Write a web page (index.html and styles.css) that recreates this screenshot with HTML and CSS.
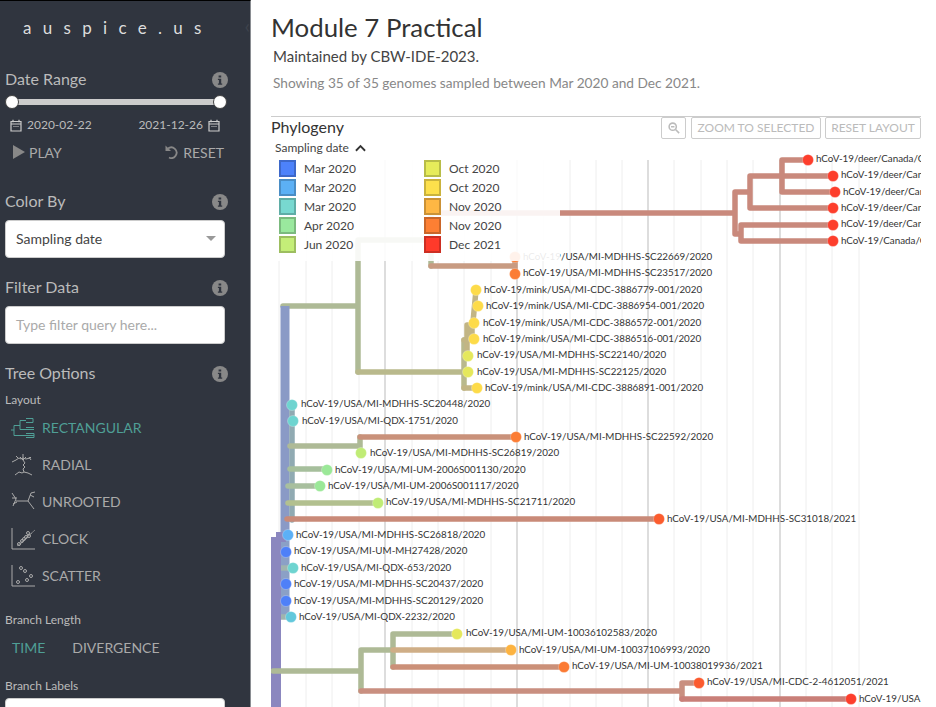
FILE: index.html
```html
<!DOCTYPE html>
<html lang="en">
<head>
    <meta charset="UTF-8">
    <title>auspice.us</title>
    <link rel="stylesheet" href="styles.css">
</head>
<body>
    <aside class="sidebar">
        <div class="brand">auspice.us</div>
        <span class="collapse">&#8249;</span>

        <div class="heading heading-date">Date Range <svg class="info" viewBox="0 0 16 16"><circle cx="8" cy="8" r="8"/><path d="M6.600 3.400h2.600v2.200H6.600zM5.900 6.800h3.300v4.600h1v1.300H5.900v-1.300h1v-3.300h-1z"/></svg></div>
        <div class="slider"><span class="knob"></span><span class="knob"></span></div>
        <div class="dates">
            <span class="date"><svg class="cal" viewBox="0 0 12 13"><path d="M1 2.500h10v9.500H1zM1 5h10M3 .800v2.400M9 .800v2.400M3.500 7.500h1M5.500 7.500h1M7.500 7.500h1"/></svg>2020-02-22</span>
            <span class="date">2021-12-26<svg class="cal" viewBox="0 0 12 13"><path d="M1 2.500h10v9.500H1zM1 5h10M3 .800v2.400M9 .800v2.400M3.500 7.500h1M5.500 7.500h1M7.500 7.500h1"/></svg></span>
        </div>
        <div class="transport">
            <span class="play"><svg class="play-icon" viewBox="0 0 12 14"><path d="M0 0l12 7-12 7z"/></svg>PLAY</span>
            <span class="reset"><svg class="reset-icon" viewBox="0 0 14 14"><path class="reset-head" d="M.500 .500v5.500h5.500z"/><path class="reset-arc" d="M3 3.500A5.300 5.300 0 1 1 4 12.500"/></svg>RESET</span>
        </div>

        <div class="heading heading-color">Color By <svg class="info" viewBox="0 0 16 16"><circle cx="8" cy="8" r="8"/><path d="M6.600 3.400h2.600v2.200H6.600zM5.900 6.800h3.300v4.600h1v1.300H5.900v-1.300h1v-3.300h-1z"/></svg></div>
        <div class="field select">Sampling date<span class="caret"></span></div>

        <div class="heading heading-filter">Filter Data <svg class="info" viewBox="0 0 16 16"><circle cx="8" cy="8" r="8"/><path d="M6.600 3.400h2.600v2.200H6.600zM5.900 6.800h3.300v4.600h1v1.300H5.900v-1.300h1v-3.300h-1z"/></svg></div>
        <div class="field placeholder">Type filter query here...</div>

        <div class="heading heading-tree">Tree Options <svg class="info" viewBox="0 0 16 16"><circle cx="8" cy="8" r="8"/><path d="M6.600 3.400h2.600v2.200H6.600zM5.900 6.800h3.300v4.600h1v1.300H5.900v-1.300h1v-3.300h-1z"/></svg></div>
        <div class="sublabel sublabel-layout">Layout</div>
        <ul class="layouts">
            <li class="layout active">
                <svg class="layout-icon" viewBox="0 0 24 22"><path d="M0 13h3M3 8.500v10M3 8.500h6M9 3.500v9M9 3.500h6M15 1.500h7v4h-7M9 12.500h14M3 18.500h20M15 10.500h8M15 16.500h8v4h-8"/></svg>
                RECTANGULAR
            </li>
            <li class="layout">
                <svg class="layout-icon" viewBox="0 0 24 24"><path d="M1 9l4-2 3-2 2 1 2-1 3 1 4-1 1-1M12 1v6M9 4l3 3 3-3M12 7l2 3-2 2 2 2-2 2 1 3M4 22l4-3 3 1 2-1 4 1 4 2M7 5l-2-2M18 4l2 3"/></svg>
                RADIAL
            </li>
            <li class="layout">
                <svg class="layout-icon" viewBox="0 0 24 24"><path d="M1 3l4 6-3 7M1 8h5M5 11l12 0M17 11l3-8 4-1M19 5l4 2M17 11l6 8M2 14l4-2"/></svg>
                UNROOTED
            </li>
            <li class="layout">
                <svg class="layout-icon" viewBox="0 0 24 24"><path d="M1 1v21h23"/><path class="thin" d="M6 19L24 3M8 19l4-5 5-5 4-3"/><circle cx="8" cy="17" r="1.500"/><circle cx="11" cy="14" r="1.500"/><circle cx="13" cy="12" r="1.500"/><circle cx="15" cy="10" r="1.500"/><circle cx="18" cy="9" r="1.500"/><circle cx="17" cy="6" r="1.500"/></svg>
                CLOCK
            </li>
            <li class="layout">
                <svg class="layout-icon" viewBox="0 0 24 24"><path d="M1 1v21h23"/><circle cx="10" cy="4" r="1.500"/><circle cx="14" cy="7" r="1.500"/><circle cx="20" cy="12" r="1.500"/><circle cx="16" cy="16" r="1.500"/><circle cx="7" cy="18" r="1.500"/></svg>
                SCATTER
            </li>
        </ul>
        <div class="sublabel sublabel-length">Branch Length</div>
        <div class="toggle"><span class="toggle-on">TIME</span><span>DIVERGENCE</span></div>
        <div class="sublabel sublabel-labels">Branch Labels</div>
        <div class="field select select-last"></div>
    </aside>

    <main class="main">
        <h1 class="title">Module 7 Practical</h1>
        <p class="byline">Maintained by CBW-IDE-2023.</p>
        <p class="summary">Showing 35 of 35 genomes sampled between Mar 2020 and Dec 2021.</p>

        <section class="panel">
            <svg class="tree" width="650" height="591" viewBox="271 116 650 591">
                <g class="grid">
                    <path d="M279 160V707M306 160V707M332 160V707M359 160V707M412 160V707M438 160V707M464 160V707M491 160V707M543 160V707M570 160V707M596 160V707M622 160V707M674 160V707M701 160V707M727 160V707M753 160V707M806 160V707M832 160V707M859 160V707"/>
                    <path class="major" d="M385 160V707M517 160V707M648 160V707M780 160V707"/>
                </g>

                <g class="branches">
                    <!-- deer clade -->
                    <path stroke="#c9897c" d="M431 213H735M735 192V234M735 192H750M750 176V208M750 176H782M782 160V192M782 160H808M782 192H835M750 176H833M750 208H833M735 234H741M741 225V241M741 225H833M741 241H833"/>
                    <path stroke="#aeba96" d="M358 240H431M431 213V266M358 240V372M283 306H358"/>
                    <path stroke="#c89b82" d="M431 266H515M515 257V274"/>
                    <!-- mink clade -->
                    <path stroke="#b9b98c" d="M358 372H464M464 340V388"/>
                    <path stroke="#c2b584" d="M464 388H477M464 340H474M467 325V355M467 355H468M467 325H474M472 339V322M473 322L476 290M475 306H478"/>
                    <!-- middle -->
                    <path class="thick" stroke="#8a9ac6" d="M285 306V532"/>
                    <path stroke="#90aab2" d="M292 405V520M292 421H293"/>
                    <path stroke="#aeba96" d="M290 446H360M360 437V452"/>
                    <path stroke="#c9917a" d="M360 437H516"/>
                    <path stroke="#a6bf9c" d="M290 469H327"/>
                    <path stroke="#a8bf9e" d="M288 486H320"/>
                    <path stroke="#b2c08f" d="M288 503H377"/>
                    <path stroke="#c98a78" d="M287 519H659"/>
                    <!-- lower -->
                    <path class="thick" stroke="#8ba0c6" d="M285 535V617"/>
                    <path stroke="#a0b4ae" d="M281 568H293M281 617H291"/>
                    <path class="root" stroke="#8b87bf" d="M276 537V707M276 537H286"/>
                    <path stroke="#aeba96" d="M273 671H361M361 650V691M361 650H393M393 634V667M393 634H457"/>
                    <path stroke="#cfae87" d="M393 650H511"/>
                    <path stroke="#cb9078" d="M393 667H564"/>
                    <path stroke="#c98f80" d="M361 691H682M682 683V699M682 683H699"/>
                    <path stroke="#c97f78" d="M682 699H851"/>
                </g>

                <g class="tips">
                    <circle cx="808" cy="160" r="5.500" fill="#fd3e2c"/>
                    <circle cx="833" cy="176" r="5.500" fill="#fd3e2c"/>
                    <circle cx="835" cy="192" r="5.500" fill="#fd3e2c"/>
                    <circle cx="833" cy="208" r="5.500" fill="#fd3e2c"/>
                    <circle cx="833" cy="225" r="5.500" fill="#fd3e2c"/>
                    <circle cx="833" cy="241" r="5.500" fill="#fd3e2c"/>
                    <circle cx="515" cy="257" r="5.500" fill="#fb7d35"/>
                    <circle cx="515" cy="274" r="5.500" fill="#fb7d35"/>
                    <circle cx="476" cy="290" r="5.500" fill="#fddb49"/>
                    <circle cx="478" cy="306" r="5.500" fill="#fddb49"/>
                    <circle cx="474" cy="323" r="5.500" fill="#fddb49"/>
                    <circle cx="474" cy="339" r="5.500" fill="#fddb49"/>
                    <circle cx="468" cy="356" r="5.500" fill="#e5e85c"/>
                    <circle cx="468" cy="372" r="5.500" fill="#e5e85c"/>
                    <circle cx="477" cy="388" r="5.500" fill="#fddb49"/>
                    <circle cx="292" cy="405" r="5.500" fill="#6ed4d0"/>
                    <circle cx="293" cy="421" r="5.500" fill="#6ed4d0"/>
                    <circle cx="516" cy="437" r="5.500" fill="#fb7d35"/>
                    <circle cx="361" cy="453" r="5.500" fill="#c0ec76"/>
                    <circle cx="327" cy="470" r="5.500" fill="#9be898"/>
                    <circle cx="320" cy="486" r="5.500" fill="#9be898"/>
                    <circle cx="378" cy="503" r="5.500" fill="#c0ec76"/>
                    <circle cx="659" cy="519" r="5.500" fill="#fb5c2e"/>
                    <circle cx="288" cy="535" r="5.500" fill="#5cb0f6"/>
                    <circle cx="286" cy="552" r="5.500" fill="#4e80f8"/>
                    <circle cx="293" cy="568" r="5.500" fill="#6ed4d0"/>
                    <circle cx="286" cy="584" r="5.500" fill="#4e80f8"/>
                    <circle cx="286" cy="601" r="5.500" fill="#4e80f8"/>
                    <circle cx="291" cy="617" r="5.500" fill="#62c8dc"/>
                    <circle cx="457" cy="634" r="5.500" fill="#e5e85c"/>
                    <circle cx="511" cy="650" r="5.500" fill="#fdb340"/>
                    <circle cx="564" cy="667" r="5.500" fill="#fb7a33"/>
                    <circle cx="699" cy="683" r="5.500" fill="#fb5a2e"/>
                    <circle cx="851" cy="699" r="5.500" fill="#fd3e2c"/>
                </g>

                <g class="tip-labels">
                    <text x="816" y="162">hCoV-19/deer/Canada/ON-WHL-4658/2021</text>
                    <text x="841" y="178">hCoV-19/deer/Canada/ON-WHL-4581/2021</text>
                    <text x="843" y="195">hCoV-19/deer/Canada/ON-WHL-4602/2021</text>
                    <text x="841" y="211">hCoV-19/deer/Canada/ON-WHL-4669/2021</text>
                    <text x="841" y="227">hCoV-19/deer/Canada/ON-WHL-4702/2021</text>
                    <text x="841" y="244">hCoV-19/Canada/ON-PHL-21-44225/2021</text>
                    <text x="523" y="260">hCoV-19/USA/MI-MDHHS-SC22669/2020</text>
                    <text x="523" y="276">hCoV-19/USA/MI-MDHHS-SC23517/2020</text>
                    <text x="484" y="293">hCoV-19/mink/USA/MI-CDC-3886779-001/2020</text>
                    <text x="486" y="309">hCoV-19/mink/USA/MI-CDC-3886954-001/2020</text>
                    <text x="483" y="326">hCoV-19/mink/USA/MI-CDC-3886572-001/2020</text>
                    <text x="483" y="342">hCoV-19/mink/USA/MI-CDC-3886516-001/2020</text>
                    <text x="477" y="358">hCoV-19/USA/MI-MDHHS-SC22140/2020</text>
                    <text x="477" y="375">hCoV-19/USA/MI-MDHHS-SC22125/2020</text>
                    <text x="485" y="391">hCoV-19/mink/USA/MI-CDC-3886891-001/2020</text>
                    <text x="301" y="407">hCoV-19/USA/MI-MDHHS-SC20448/2020</text>
                    <text x="302" y="424">hCoV-19/USA/MI-QDX-1751/2020</text>
                    <text x="524" y="440">hCoV-19/USA/MI-MDHHS-SC22592/2020</text>
                    <text x="370" y="456">hCoV-19/USA/MI-MDHHS-SC26819/2020</text>
                    <text x="335" y="473">hCoV-19/USA/MI-UM-2006S001130/2020</text>
                    <text x="328" y="489">hCoV-19/USA/MI-UM-2006S001117/2020</text>
                    <text x="386" y="505">hCoV-19/USA/MI-MDHHS-SC21711/2020</text>
                    <text x="667" y="522">hCoV-19/USA/MI-MDHHS-SC31018/2021</text>
                    <text x="296" y="538">hCoV-19/USA/MI-MDHHS-SC26818/2020</text>
                    <text x="294" y="554">hCoV-19/USA/MI-UM-MH27428/2020</text>
                    <text x="301" y="571">hCoV-19/USA/MI-QDX-653/2020</text>
                    <text x="294" y="587">hCoV-19/USA/MI-MDHHS-SC20437/2020</text>
                    <text x="294" y="604">hCoV-19/USA/MI-MDHHS-SC20129/2020</text>
                    <text x="299" y="620">hCoV-19/USA/MI-QDX-2232/2020</text>
                    <text x="466" y="636">hCoV-19/USA/MI-UM-10036102583/2020</text>
                    <text x="519" y="653">hCoV-19/USA/MI-UM-10037106993/2020</text>
                    <text x="572" y="669">hCoV-19/USA/MI-UM-10038019936/2021</text>
                    <text x="707" y="685">hCoV-19/USA/MI-CDC-2-4612051/2021</text>
                    <text x="859" y="702">hCoV-19/USA</text>
                </g>
            </svg>

            <div class="panel-head">
                <h2 class="panel-title">Phylogeny</h2>
                <div class="tools">
                    <span class="tool tool-icon"><svg class="zoom-icon" viewBox="0 0 14 14"><circle cx="5.500" cy="5.500" r="4.200"/><path d="M8.800 8.800L13 13M3.500 5.500h4"/></svg></span>
                    <span class="tool tool-zoom">ZOOM TO SELECTED</span>
                    <span class="tool tool-reset">RESET LAYOUT</span>
                </div>
            </div>
            <div class="legend-title">Sampling date <svg class="chev" viewBox="0 0 12 8"><path d="M1 7l5-5 5 5"/></svg></div>
            <div class="legend">
                <div class="legend-item"><span class="swatch swatch-1"></span>Mar 2020</div>
                <div class="legend-item"><span class="swatch swatch-6"></span>Oct 2020</div>
                <div class="legend-item"><span class="swatch swatch-2"></span>Mar 2020</div>
                <div class="legend-item"><span class="swatch swatch-7"></span>Oct 2020</div>
                <div class="legend-item"><span class="swatch swatch-3"></span>Mar 2020</div>
                <div class="legend-item"><span class="swatch swatch-8"></span>Nov 2020</div>
                <div class="legend-item"><span class="swatch swatch-4"></span>Apr 2020</div>
                <div class="legend-item"><span class="swatch swatch-9"></span>Nov 2020</div>
                <div class="legend-item"><span class="swatch swatch-5"></span>Jun 2020</div>
                <div class="legend-item"><span class="swatch swatch-10"></span>Dec 2021</div>
            </div>
        </section>
    </main>
</body>
</html>
```
FILE: styles.css
```css
/* General styles */
html, body {
    margin: 0;
    height: 100%;
    overflow: hidden;
}

body {
    display: flex;
    font-family: Lato, "Open Sans", sans-serif;
    background-color: #fff;
    color: #333;
}

/* Sidebar */
.sidebar {
    position: relative;
    flex: 0 0 251px;
    box-sizing: border-box;
    height: 707px;
    overflow: hidden;
    padding: 0 25px 0 5px;
    background-color: #30353f;
    border-top: 1px solid #000;
    border-right: 1px solid #8a8d92;
    color: #bbb;
}

.brand {
    margin: 17px 0 0 18px;
    font-size: 17px;
    line-height: 20px;
    letter-spacing: 11.300px;
    white-space: nowrap;
    color: #ddd;
}

.collapse {
    position: absolute;
    top: 12px;
    right: 0;
    font-size: 20px;
    color: #3e434d;
}

.heading {
    display: flex;
    justify-content: space-between;
    align-items: center;
    height: 20px;
    font-size: 16px;
    color: #bbb;
}

.heading-date { margin-top: 30px; }
.heading-color { margin-top: 28px; }
.heading-filter { margin-top: 18px; }
.heading-tree { margin-top: 18px; }

.info {
    width: 16px;
    height: 16px;
    margin: 3px -3px 0 0;
    fill: #888;
}

.info path {
    fill: #30353f;
}

.slider {
    position: relative;
    display: flex;
    justify-content: space-between;
    align-items: center;
    height: 6px;
    margin: 11px -2px 0 0;
    background: linear-gradient(#ccc, #ccc) no-repeat center / 208px 6px;
}

.knob {
    box-sizing: border-box;
    width: 14px;
    height: 14px;
    background-color: #fff;
    border: 1px solid #444;
    border-radius: 50%;
}

.dates {
    display: flex;
    justify-content: space-between;
    align-items: center;
    margin-top: 12px;
    padding: 0 5px;
    font-size: 12px;
    line-height: 16px;
    color: #bbb;
}

.date {
    display: flex;
    align-items: center;
    gap: 5px;
}

.cal {
    width: 12px;
    height: 13px;
    fill: none;
    stroke: #ccc;
    stroke-width: 1.200;
}

.transport {
    display: flex;
    justify-content: space-between;
    align-items: center;
    margin-top: 11px;
    padding-left: 8px;
    padding-right: 1px;
    font-size: 14px;
    line-height: 18px;
    color: #aaa;
}

.play, .reset {
    display: flex;
    align-items: center;
    gap: 4px;
}

.play-icon {
    width: 12px;
    height: 14px;
    margin-top: -3px;
    fill: #888;
}

.reset-icon {
    width: 14px;
    height: 14px;
    margin-top: -3px;
}

.reset-head {
    fill: #888;
}

.reset-arc {
    fill: none;
    stroke: #888;
    stroke-width: 1.800;
}

.field {
    box-sizing: border-box;
    position: relative;
    height: 38px;
    margin-top: 10px;
    padding-left: 10px;
    background-color: #fff;
    border: 1px solid #ccc;
    border-radius: 4px;
    font-size: 14px;
    line-height: 36px;
    color: #444;
}

.select-last {
    margin-top: 4px;
}

.placeholder {
    color: #aaa;
}

.caret {
    position: absolute;
    top: 15px;
    right: 8px;
    border-top: 5px solid #999;
    border-left: 5px solid transparent;
    border-right: 5px solid transparent;
}

.sublabel {
    font-size: 12px;
    line-height: 16px;
    color: #bbb;
}

.sublabel-layout { margin-top: 10px; }
.sublabel-length { margin-top: 18px; }
.sublabel-labels { margin-top: 21px; }

/* Layout buttons */
.layouts {
    list-style: none;
    margin: 1px 0 0 0;
    padding: 0;
}

.layout {
    display: flex;
    align-items: center;
    gap: 7px;
    height: 37px;
    padding-left: 6px;
    font-size: 14px;
    color: #aaa;
}

.layout.active {
    color: #4f9f96;
}

.layout-icon {
    width: 24px;
    height: 24px;
    fill: none;
    stroke: #aaa;
    stroke-width: 1;
}

.layout.active .layout-icon {
    stroke: #4f9f96;
}

.layout-icon .thin {
    stroke-width: .6;
}

.toggle {
    display: flex;
    gap: 27px;
    margin-top: 11px;
    padding-left: 7px;
    font-size: 14px;
    line-height: 18px;
    color: #aaa;
}

.toggle-on {
    color: #4f9f96;
}

/* Main column */
.main {
    flex: 1;
    min-width: 0;
    padding: 0 15px 0 20px;
}

.title {
    margin: 10px 0 0;
    font-size: 25.800px;
    font-weight: 400;
    line-height: 34px;
    color: #333;
}

.byline {
    margin: 3px 0 0 2px;
    font-size: 15px;
    line-height: 18px;
    color: #444;
}

.summary {
    margin: 9px 0 0 2px;
    font-size: 13.700px;
    line-height: 18px;
    color: #888;
}

/* Tree panel */
.panel {
    position: relative;
    height: 591px;
    margin-top: 24px;
    border-top: 1px solid #ccc;
    box-sizing: border-box;
}

.tree {
    position: absolute;
    top: -1px;
    left: 0;
}

.grid path {
    fill: none;
    stroke: #eee;
    stroke-width: 1;
}

.grid .major {
    stroke: #ddd;
    stroke-width: 2;
}

.branches path {
    fill: none;
    stroke-width: 5.500;
    stroke-linecap: round;
}

.branches .thick { stroke-width: 9; stroke-linecap: butt; }
.branches .root { stroke-width: 10; stroke-linecap: butt; stroke-linejoin: round; }

.tips circle {
    stroke: #fff;
    stroke-opacity: .25;
    stroke-width: 1;
}

.tip-labels text {
    font-size: 9.800px;
    fill: #333;
}

.panel-head {
    position: relative;
    display: flex;
    justify-content: space-between;
}

.panel-title {
    margin: 0;
    font-size: 16px;
    font-weight: 400;
    line-height: 20px;
    color: #333;
}

.tools {
    display: flex;
    gap: 4px;
}

.tool {
    box-sizing: border-box;
    height: 22px;
    background-color: #fff;
    border: 1px solid #ccc;
    border-radius: 2px;
    font-size: 12px;
    line-height: 20px;
    text-align: center;
    color: #bbb;
}

.tool-zoom { width: 130px; }
.tool-reset { width: 96px; }

.tool-icon {
    display: flex;
    justify-content: center;
    align-items: center;
    width: 25px;
    margin-right: 1px;
}

.zoom-icon {
    width: 12px;
    height: 12px;
    fill: none;
    stroke: #bbb;
    stroke-width: 1.800;
}

.legend-title {
    position: relative;
    display: flex;
    align-items: center;
    gap: 6px;
    margin: 1px 0 0 4px;
    font-size: 12px;
    line-height: 16px;
    color: #444;
}

.chev {
    width: 11px;
    height: 8px;
    fill: none;
    stroke: #333;
    stroke-width: 2;
}

.legend {
    position: absolute;
    top: 42px;
    left: 0;
    box-sizing: border-box;
    display: grid;
    grid-template-columns: 145px 1fr;
    grid-auto-rows: 19px;
    width: 289px;
    height: 102px;
    padding: 0 0 0 8px;
    background-color: rgba(255, 255, 255, .9);
}

.legend-item {
    display: flex;
    align-items: center;
    gap: 8px;
    font-size: 12px;
    color: #444;
}

.swatch {
    box-sizing: border-box;
    width: 17px;
    height: 17px;
    border: 2px solid;
}

.swatch-1 { background-color: #4d82fa; border-color: #3d68c9; }
.swatch-2 { background-color: #5cb0f5; border-color: #4a8dc5; }
.swatch-3 { background-color: #78d8d0; border-color: #5fada6; }
.swatch-4 { background-color: #9ae89e; border-color: #7bba7e; }
.swatch-5 { background-color: #c4ee78; border-color: #9dbe60; }
.swatch-6 { background-color: #e6ec5a; border-color: #b8bd48; }
.swatch-7 { background-color: #fde04c; border-color: #cab33d; }
.swatch-8 { background-color: #feb744; border-color: #cb9236; }
.swatch-9 { background-color: #fd7f33; border-color: #ca6629; }
.swatch-10 { background-color: #ff3a2a; border-color: #cc2e22; }
```
